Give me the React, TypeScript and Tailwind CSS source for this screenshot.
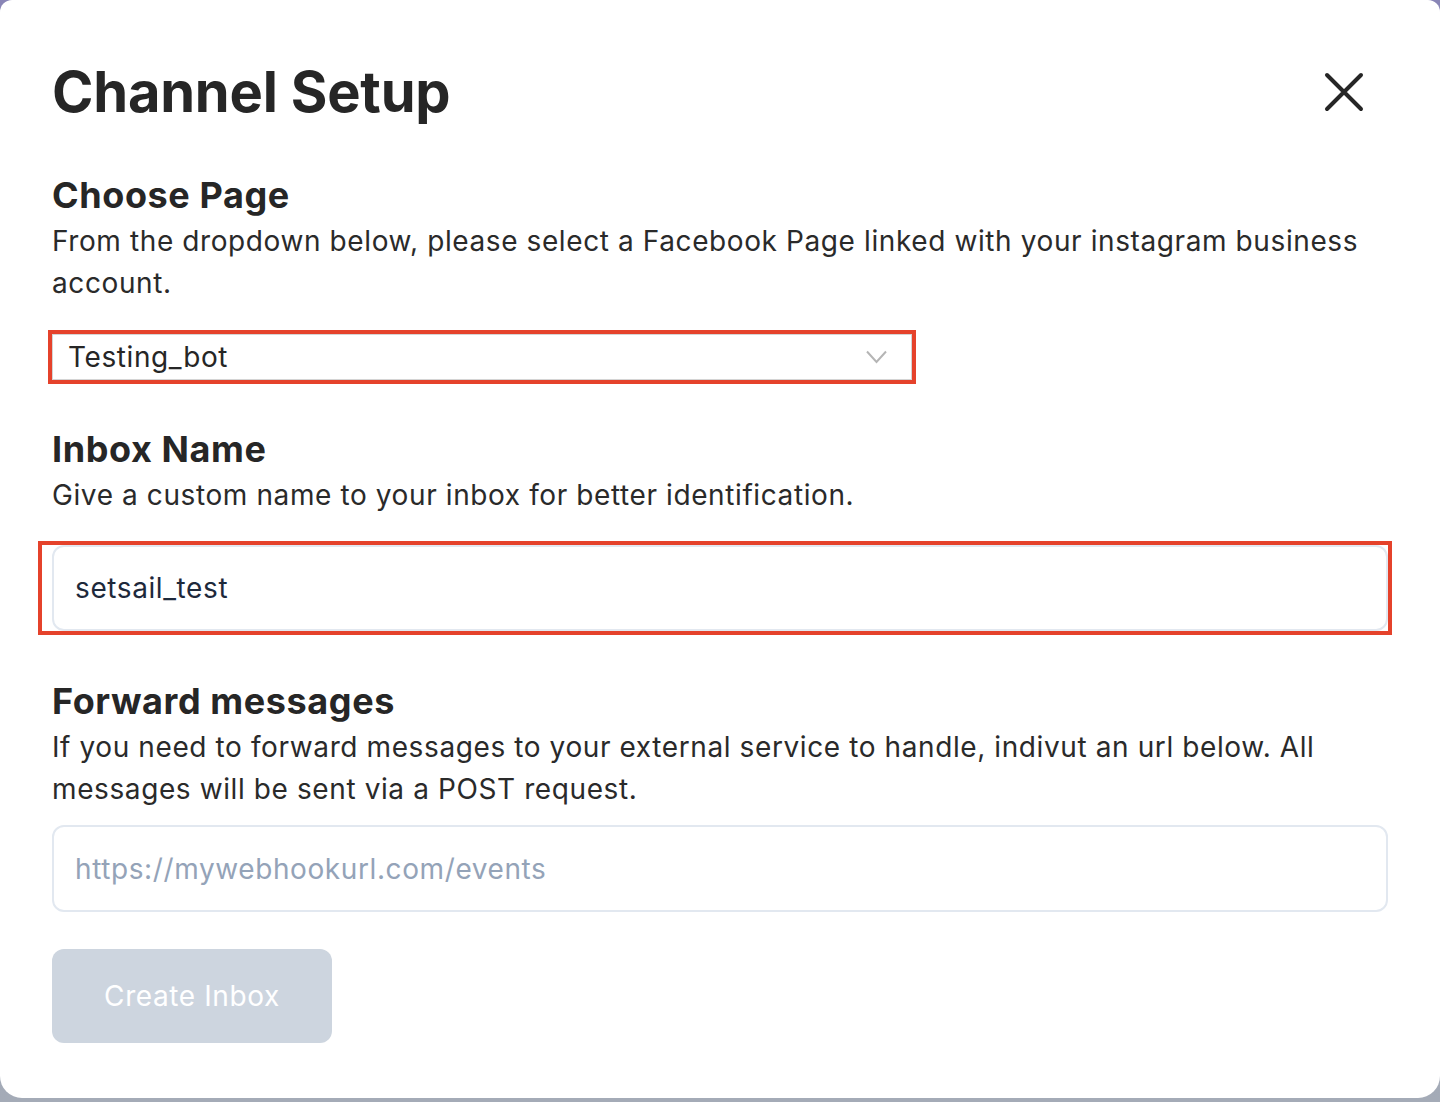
import { useState } from 'react'

// Channel setup modal (instagram inbox)

function CloseIcon() {
  return (
    <svg width="40" height="40" viewBox="0 0 40 40" fill="none">
      <path d="M3 3L37 37M37 3L3 37" stroke="#262626" strokeWidth="4" strokeLinecap="round" />
    </svg>
  )
}

function Chevron() {
  return (
    <svg width="21" height="14" viewBox="0 0 21 14" fill="none">
      <path d="M1 1.5L10.5 12L20 1.5" stroke="#b5b5b5" strokeWidth="2" />
    </svg>
  )
}

export default function App() {
  const [inboxName, setInboxName] = useState('setsail_test')
  const [webhook, setWebhook] = useState('')

  return (
    <div className="h-[1102px] w-full overflow-hidden bg-gradient-to-b from-[#8985b6] to-[#a4abb7] font-['Inter',sans-serif] text-[#262626]">
      <div className="flex h-[1098px] flex-col rounded-t-[12px] rounded-b-[22px] bg-white pr-[52px] pl-[52px]">
        <div className="flex items-center justify-between pt-[56px]">
          <h1 className="text-[56px] leading-[72px] font-bold tracking-[-0.2px]">Channel Setup</h1>
          <button type="button" className="mr-[24px]" aria-label="Close">
            <CloseIcon />
          </button>
        </div>

        <section className="mt-[42px]">
          <h2 className="text-[36px] leading-[50px] font-bold tracking-[0.6px]">Choose Page</h2>
          <p className="text-[28px] leading-[42px] tracking-[0.6px] text-[#2a2a2a]">
            From the dropdown below, please select a Facebook Page linked with your instagram business account.
          </p>
          <div className="-ml-[4px] mt-[26px] w-[868px] border-[4px] border-[#e5422b]">
            <div className="flex h-[46px] items-center justify-between border border-[#d4d4d4] pr-[24px] pl-[15px]">
              <span className="text-[28px] tracking-[0.6px]">Testing_bot</span>
              <Chevron />
            </div>
          </div>
        </section>

        <section className="mt-[40px]">
          <h2 className="text-[36px] leading-[50px] font-bold tracking-[0.6px]">Inbox Name</h2>
          <p className="text-[28px] leading-[42px] tracking-[0.6px] text-[#2a2a2a]">
            Give a custom name to your inbox for better identification.
          </p>
          <div className="-mr-[4px] -ml-[14px] mt-[25px] border-[4px] border-[#e5422b] pl-[10px]">
            <input
              value={inboxName}
              onChange={(e) => setInboxName(e.target.value)}
              className="h-[86px] w-full rounded-[12px] border-2 border-[#e2e8f0] bg-white px-[21px] text-[28px] tracking-[0.6px] text-[#1e293b] outline-none"
            />
          </div>
        </section>

        <section className="mt-[41px]">
          <h2 className="text-[36px] leading-[50px] font-bold tracking-[0.6px]">Forward messages</h2>
          <p className="text-[28px] leading-[42px] tracking-[0.6px] text-[#2a2a2a]">
            If you need to forward messages to your external service to handle, indivut an url below. All messages will be sent via a POST request.
          </p>
          <input
            value={webhook}
            onChange={(e) => setWebhook(e.target.value)}
            placeholder="https://mywebhookurl.com/events"
            className="mt-[15px] h-[87px] w-full rounded-[12px] border-2 border-[#e2e8f0] bg-white px-[21px] text-[28px] tracking-[0.6px] text-[#1e293b] outline-none placeholder:text-[#94a3b8]"
          />
        </section>

        <div className="mt-[37px]">
          <button
            type="button"
            disabled
            className="h-[94px] w-[280px] rounded-[12px] bg-[#cdd5df] text-[28px] tracking-[0.6px] text-white"
          >
            Create Inbox
          </button>
        </div>
      </div>
    </div>
  )
}
